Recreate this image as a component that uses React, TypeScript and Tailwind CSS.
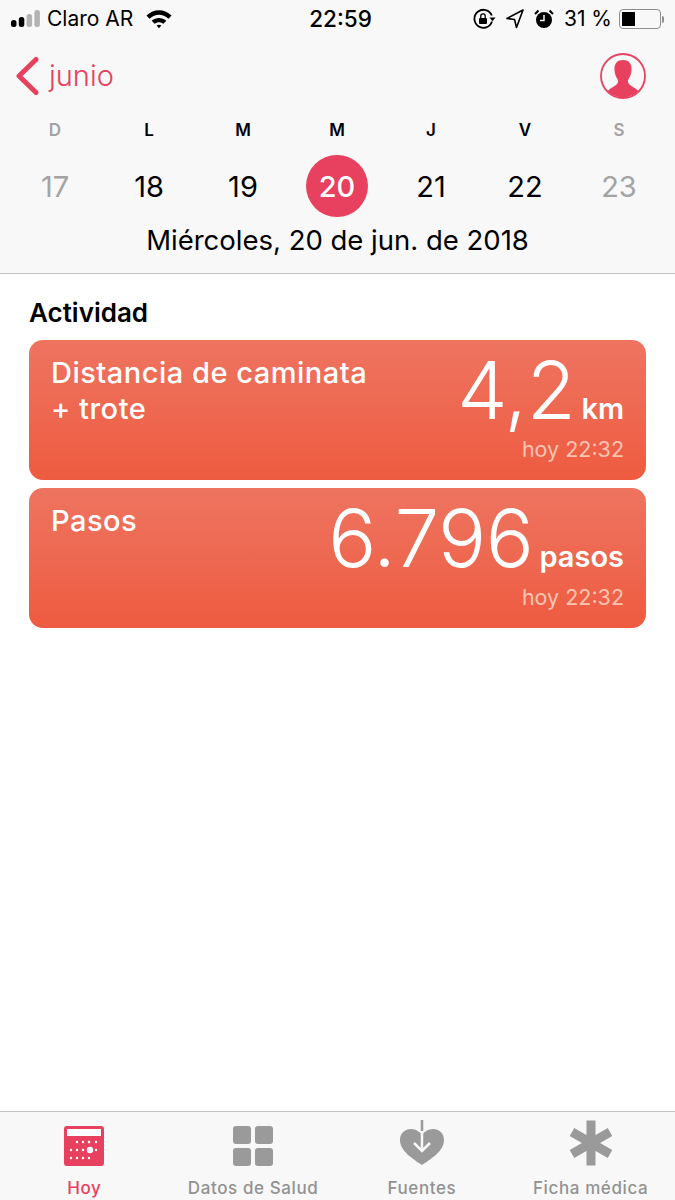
const days = [
  { l: "D", n: "17", muted: true },
  { l: "L", n: "18" },
  { l: "M", n: "19" },
  { l: "M", n: "20", active: true },
  { l: "J", n: "21" },
  { l: "V", n: "22" },
  { l: "S", n: "23", muted: true },
];

function Card({ title, value, unit }: { title: React.ReactNode; value: string; unit: string }) {
  return (
    <div className="flex h-[140px] justify-between rounded-[14px] bg-gradient-to-b from-[#ee7460] to-[#ee5b40] pl-[22px] pr-[22px] text-white">
      <div className="pt-[15px] text-[29px] leading-[36px] font-medium tracking-[0.5px]">{title}</div>
      <div className="flex flex-col items-end">
        <div className="flex h-[92px] items-baseline gap-[6px] pt-[10px]">
          <span className="text-[80px] leading-[80px] font-light tracking-[-0.4px]">{value}</span>
          <span className="text-[29px] leading-[32px] font-semibold">{unit}</span>
        </div>
        <div className="mt-[3px] text-[21.5px] leading-[28px] text-[#fbc4b2]">hoy 22:32</div>
      </div>
    </div>
  );
}

function Tab({ label, active, children }: { label: string; active?: boolean; children: React.ReactNode }) {
  return (
    <div className={`flex w-[169px] flex-col items-center ${active ? "text-[#e8405f]" : "text-[#929292]"}`}>
      <div className="flex h-[57px] items-end pb-[3px]">{children}</div>
      <div className="mt-[9px] text-[17px] leading-[20px] font-medium tracking-[0.6px]">{label}</div>
    </div>
  );
}

export default function App() {
  return (
    <div className="flex h-[1200px] w-[675px] flex-col overflow-hidden bg-white font-['Inter',sans-serif] text-black">
      <header className="h-[274px] border-b border-[#c4c4c4] bg-[#f8f8f8]">
        <div className="flex h-[36px] items-center justify-between pt-[2px] pl-[11px] pr-[11px]">
          <div className="flex w-[206px] items-center">
            <svg width="30" height="18" viewBox="0 0 30 18">
              <rect x="0" y="10" width="5.5" height="7" rx="2.5" fill="#000" />
              <rect x="7.8" y="7" width="5.5" height="10" rx="2.5" fill="#000" />
              <rect x="15.6" y="4" width="5.5" height="13" rx="2.5" fill="#b3b3b3" />
              <rect x="23.4" y="0" width="5.5" height="17" rx="2.5" fill="#b3b3b3" />
            </svg>
            <span className="ml-[6px] text-[21px] leading-[26px]">Claro AR</span>
            <svg className="ml-[12px]" width="28" height="20" viewBox="0 0 28 20">
              <path d="M1.5 6.5C9 -0.5 19 -0.5 26.5 6.5L23.5 9.7C17.5 4.5 10.5 4.5 4.5 9.7Z" fill="#000" />
              <path d="M6.7 11.7C11 8 17 8 21.3 11.7L18.4 14.8C15.6 12.6 12.4 12.6 9.6 14.8Z" fill="#000" />
              <path d="M11.6 16.6C13 15.4 15 15.4 16.4 16.6L14 19.3Z" fill="#000" />
            </svg>
          </div>
          <div className="text-[22.5px] leading-[26px] font-medium">22:59</div>
          <div className="flex w-[200px] items-center justify-end">
            <svg width="24" height="22" viewBox="0 0 24 22" fill="none">
              <path d="M20 13.5A9 9 0 1 1 19.8 7.5" stroke="#000" strokeWidth="1.8" />
              <path d="M17.5 9.5h6l-3 3.7Z" fill="#000" />
              <rect x="7" y="10" width="8" height="6" rx="1" fill="#000" />
              <path d="M8.8 10V8a2.2 2.2 0 0 1 4.4 0v2" stroke="#000" strokeWidth="1.3" />
            </svg>
            <svg className="ml-[10px]" width="18" height="20" viewBox="0 0 18 20" fill="none">
              <path d="M17 1L1 9.5L8.5 10.5L10.5 18.5Z" stroke="#000" strokeWidth="1.6" strokeLinejoin="round" />
            </svg>
            <svg className="ml-[10px]" width="20" height="20" viewBox="0 0 20 20">
              <circle cx="10" cy="11" r="8" fill="#000" />
              <path d="M10 6v5.5H6" stroke="#f8f8f8" strokeWidth="1.5" fill="none" />
              <path d="M1 5L4.5 1.5M19 5L15.5 1.5" stroke="#000" strokeWidth="2" />
            </svg>
            <span className="ml-[10px] text-[21px] leading-[26px] whitespace-nowrap">31 %</span>
            <div className="ml-[7px] flex h-[20px] w-[42px] rounded-[4px] border-[1.5px] border-[#8e8e8e] p-[2px]">
              <div className="h-full w-[13px] bg-black" />
            </div>
            <div className="ml-[1px] h-[7px] w-[2px] rounded-r-full bg-[#8e8e8e]" />
          </div>
        </div>

        <div className="flex h-[80px] items-center justify-between pl-[16px] pr-[29px]">
          <div className="flex items-center text-[#e8405f]">
            <svg width="24" height="40" viewBox="0 0 24 40" fill="none">
              <path d="M20 3.5L3 20L20 36.5" stroke="#e8405f" strokeWidth="5" strokeLinecap="round" strokeLinejoin="round" />
            </svg>
            <span className="ml-[9px] text-[29px] leading-[36px] font-light">junio</span>
          </div>
          <svg width="46" height="46" viewBox="0 0 46 46">
            <defs>
              <clipPath id="avatar-clip">
                <circle cx="23" cy="23" r="21.5" />
              </clipPath>
            </defs>
            <circle cx="23" cy="23" r="22" fill="none" stroke="#e8405f" strokeWidth="1.8" />
            <path
              clipPath="url(#avatar-clip)"
              d="M23 7C29 7 32 11 31.5 17C31.3 21 30 24 28 27C27.5 30 29 32 33 34C36 35.5 38 37 39 40L39 46L7 46L7 40C8 37 10 35.5 13 34C17 32 18.5 30 18 27C16 24 14.7 21 14.5 17C14 11 17 7 23 7Z"
              fill="#e8405f"
            />
          </svg>
        </div>

        <div className="grid grid-cols-[repeat(7,94px)] pl-[8px]">
          {days.map((d, i) => (
            <div key={i} className="flex flex-col items-center">
              <div className={`h-[24px] pt-[2px] text-[17px] leading-[24px] font-semibold ${d.muted ? "text-[#a3a3a3]" : "text-black"}`}>{d.l}</div>
              <div
                className={`mt-[15px] flex h-[62px] w-[62px] items-center justify-center rounded-full pt-[1px] text-[29px] ${
                  d.active ? "bg-[#e8405f] font-medium text-white" : d.muted ? "text-[#a3a3a3]" : "text-black"
                }`}
              >
                {d.n}
              </div>
            </div>
          ))}
        </div>

        <div className="mt-[5px] text-center text-[27.5px] leading-[36px]">Miércoles, 20 de jun. de 2018</div>
      </header>

      <main className="flex-1 px-[29px] pt-[22px]">
        <h2 className="h-[44px] text-[26px] leading-[34px] font-semibold">Actividad</h2>
        <div className="flex flex-col gap-[8px]">
          <Card
            title={
              <>
                Distancia de caminata
                <br />+ trote
              </>
            }
            value="4,2"
            unit="km"
          />
          <Card title="Pasos" value="6.796" unit="pasos" />
        </div>
      </main>

      <nav className="flex h-[89px] border-t border-[#c4c4c4] bg-[#f8f8f8]">
        <Tab label="Hoy" active>
          <svg width="40" height="40" viewBox="0 0 40 40">
            <rect width="40" height="40" rx="3" fill="#e8405f" />
            <rect x="3" y="3" width="34" height="7" fill="#fff" />
            {[16, 24, 32].flatMap((y, r) =>
              [r === 0 ? 13 : 7, r === 0 ? 19 : 13, r === 0 ? 25 : 19, r === 1 ? 32 : 25, r === 0 ? 32 : null]
                .filter((x): x is number => x !== null)
                .map((x) => <circle key={`${x}-${y}`} cx={x} cy={y} r="1.2" fill="#fff" />)
            )}
            <circle cx="26" cy="24" r="3.2" fill="#fff" />
          </svg>
        </Tab>
        <Tab label="Datos de Salud">
          <svg width="40" height="40" viewBox="0 0 40 40" fill="#9a9a9a">
            <rect width="18" height="18" rx="3" />
            <rect x="22" width="18" height="18" rx="3" />
            <rect y="22" width="18" height="18" rx="3" />
            <rect x="22" y="22" width="18" height="18" rx="3" />
          </svg>
        </Tab>
        <Tab label="Fuentes">
          <svg width="46" height="46" viewBox="0 0 46 46">
            <path d="M23 45C14 39 1 31 1 20C1 13 6 9 12 9C17 9 21 12 23 15C25 12 29 9 34 9C40 9 45 13 45 20C45 31 32 39 23 45Z" fill="#9a9a9a" />
            <path d="M23 0V30M15 23L23 31L31 23" stroke="#f8f8f8" strokeWidth="2.5" fill="none" />
            <path d="M23 0V11" stroke="#9a9a9a" strokeWidth="2.5" />
          </svg>
        </Tab>
        <Tab label="Ficha médica">
          <svg width="44" height="46" viewBox="0 0 44 46" stroke="#9a9a9a" strokeWidth="9">
            <path d="M22 0.5V45.5M3 12L41 34M41 12L3 34" />
          </svg>
        </Tab>
      </nav>
    </div>
  );
}
